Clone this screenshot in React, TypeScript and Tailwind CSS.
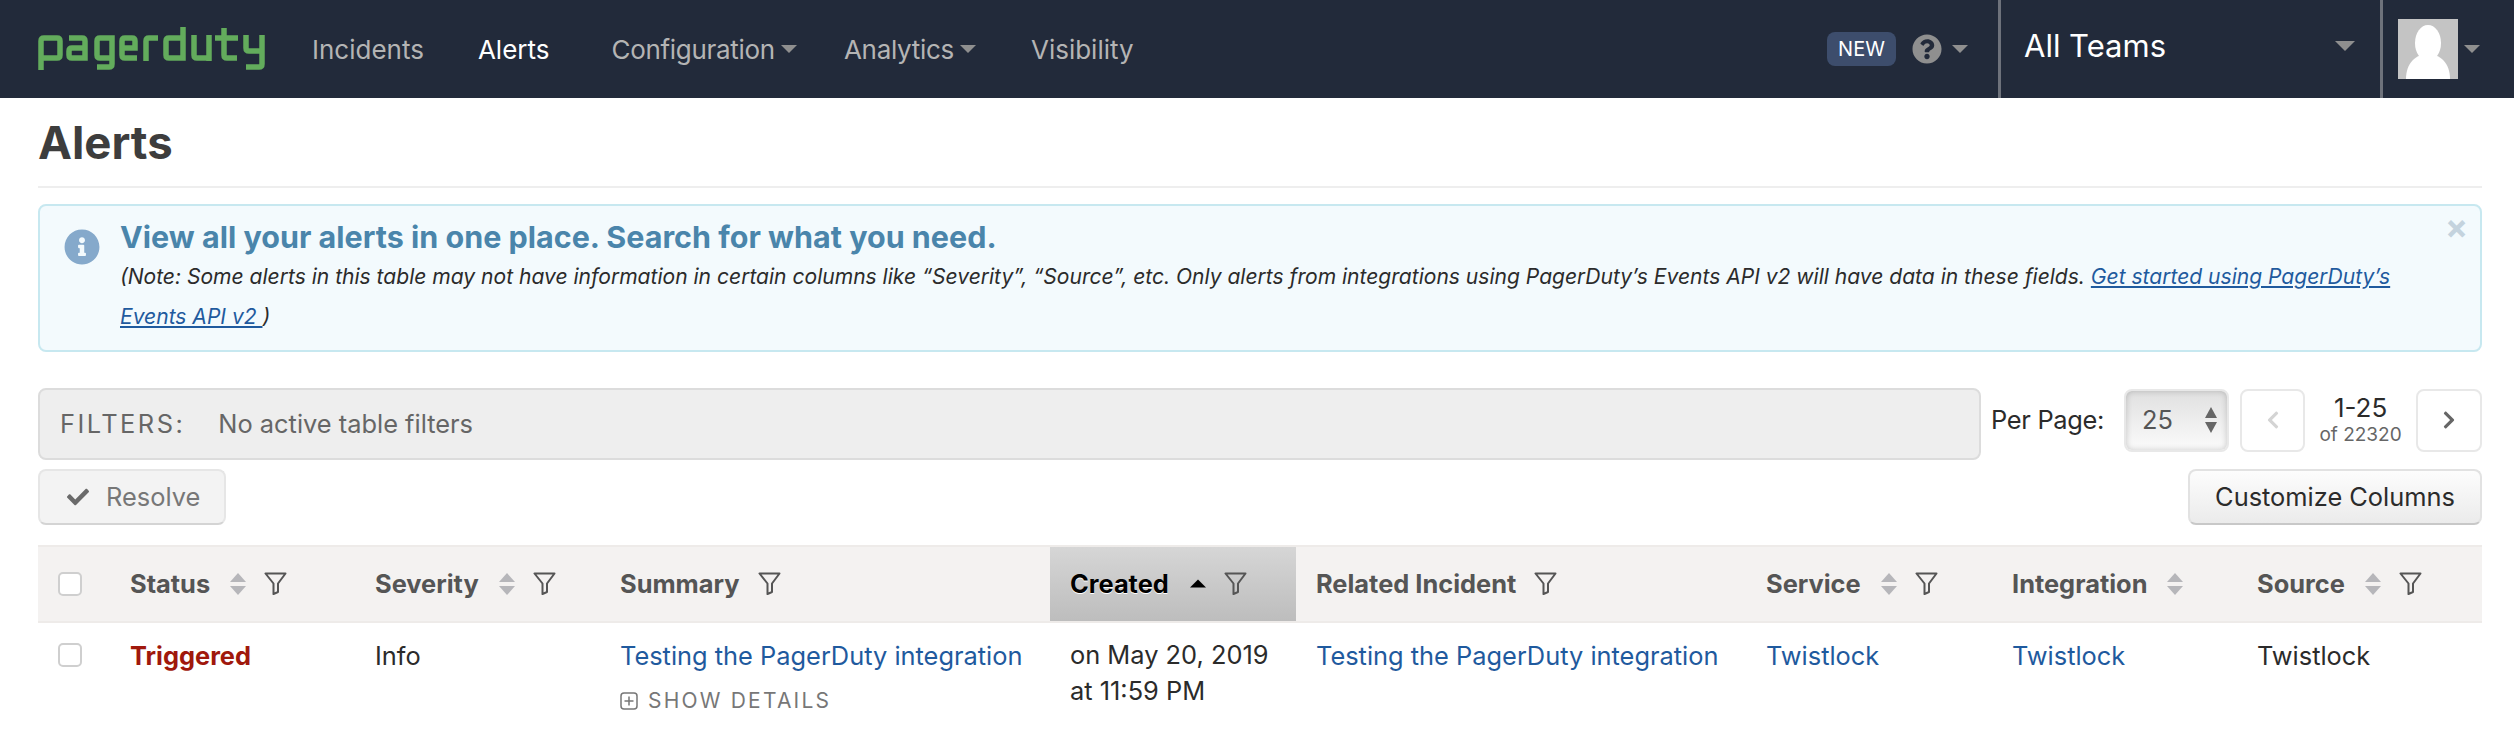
import { FaCheck, FaChevronLeft, FaChevronRight, FaInfoCircle, FaQuestionCircle } from "react-icons/fa";

function Caret({ className = "" }: { className?: string }) {
  return (
    <svg viewBox="0 0 16 8" className={className} fill="currentColor">
      <path d="M0 0H16L8 8Z" />
    </svg>
  );
}

function Logo() {
  return (
    <svg viewBox="38 27 228 44" className="w-[228px] h-[44px] shrink-0" fill="none" stroke="#63ac5c" strokeWidth="5.5">
      <path d="M41 70V41Q41 38 44 38H57Q60 38 60 41V55Q60 58 57 58H41" />
      <path d="M69 38H82Q85 38 85 41V58H72Q69 58 69 55V51Q69 48 72 48H85" />
      <path d="M112 58H100Q97 58 97 55V41Q97 38 100 38H112V64Q112 67 109 67H97" />
      <path d="M122 48H135V41Q135 38 132 38H125Q122 38 122 41V55Q122 58 125 58H137" />
      <path d="M146 61V41Q146 38 149 38H158" />
      <path d="M183 27V58H169Q166 58 166 55V41Q166 38 169 38H183" />
      <path d="M194 35V55Q194 58 197 58H209V35M209 58V61" />
      <path d="M224 28V55Q224 58 227 58H237M215 38H238" />
      <path d="M246 35V48Q246 51 249 51H262M262 35V64Q262 67 259 67H246" />
    </svg>
  );
}

function SortIcon() {
  return (
    <svg viewBox="0 0 16 22" className="w-4 h-[22px] shrink-0 text-[#b6b6ba]" fill="currentColor">
      <path d="M8 0L16 9H0Z" />
      <path d="M0 13H16L8 22Z" />
    </svg>
  );
}

function FilterIcon() {
  return (
    <svg viewBox="0 0 23 23" className="w-[23px] h-[23px] shrink-0 text-[#555]" fill="none" stroke="currentColor" strokeWidth="2" strokeLinejoin="round">
      <path d="M1.5 1.5H21.5L14 11.5V20L9.5 22V11.5Z" />
    </svg>
  );
}

function Checkbox() {
  return <span className="block w-6 h-6 rounded-[5px] border-2 border-[#cfcfcf] bg-white" />;
}

const columns = [
  { name: "Status", sort: true, filter: true },
  { name: "Severity", sort: true, filter: true },
  { name: "Summary", sort: false, filter: true },
  { name: "Created", sort: false, filter: true, active: true },
  { name: "Related Incident", sort: false, filter: true },
  { name: "Service", sort: true, filter: true },
  { name: "Integration", sort: true, filter: false },
  { name: "Source", sort: true, filter: true },
];

const linkClass = "text-[#1f5a9e]";

export default function App() {
  return (
    <div className="w-[2514px] h-[732px] overflow-hidden bg-white text-[25.4px] text-[#2b2b2b] font-['Inter',sans-serif]">
      <header className="h-[98px] bg-[#222a3a] flex items-center pl-[38px] text-[#b4b4b4]">
        <Logo />
        <nav className="flex items-center ml-[46px] text-[26px]">
          <a>Incidents</a>
          <a className="ml-[54px] text-white">Alerts</a>
          <a className="ml-[62px] flex items-center gap-[6px] tracking-[-0.3px]">
            Configuration <Caret className="w-[16px] h-2 text-[#8f8f8f]" />
          </a>
          <a className="ml-[47px] flex items-center gap-[6px] tracking-[-0.3px]">
            Analytics <Caret className="w-[16px] h-2 text-[#8f8f8f]" />
          </a>
          <a className="ml-[55px]">Visibility</a>
        </nav>
        <div className="ml-auto flex items-stretch h-full">
          <div className="flex items-center pr-[30px]">
            <span className="h-[34px] w-[69px] rounded-lg bg-[#3d4d6c] text-white text-[20px] flex items-center justify-center">NEW</span>
            <FaQuestionCircle className="ml-4 text-[30px] text-[#8f8f8f]" />
            <Caret className="ml-[10px] w-4 h-2 text-[#8f8f8f]" />
          </div>
          <div className="w-[382px] border-l-[3px] border-[#6e727b] flex items-center justify-between pl-[23px] pr-[25px] pb-[6px]">
            <span className="text-[31px] text-white">All Teams</span>
            <Caret className="w-5 h-[10px] text-[#8f8f8f]" />
          </div>
          <div className="w-[134px] border-l-[3px] border-[#6e727b] flex items-center pl-[15px]">
            <svg viewBox="0 0 60 60" className="w-[60px] h-[60px] shrink-0">
              <rect width="60" height="60" fill="#c4c4c4" />
              <ellipse cx="30" cy="24" rx="13" ry="18" fill="#fff" />
              <path d="M8 60C8 44 18 35 30 35C42 35 52 44 52 60Z" fill="#fff" />
            </svg>
            <Caret className="ml-[6px] w-4 h-2 text-[#8f8f8f]" />
          </div>
        </div>
      </header>

      <main className="pl-[38px] pr-[32px]">
        <h1 className="h-[90px] border-b-2 border-[#eeeeee] pt-[20px] text-[45.5px] leading-[50px] font-bold text-[#3d3d3d]">Alerts</h1>

        <div className="relative mt-4 h-[148px] rounded-lg border-2 border-[#c7e8f0] bg-[#f3fafd] flex pl-[24px] pt-[12px]">
          <FaInfoCircle className="mt-[11px] text-[36px] text-[#85a9cb] shrink-0" />
          <div className="ml-[20px] pr-[50px]">
            <div className="text-[30.5px] leading-[38px] font-bold text-[#4a85ab]">View all your alerts in one place. Search for what you need.</div>
            <p className="mt-[1px] italic text-[21.05px] leading-[40px] text-[#2b2b2b]">
              (Note: Some alerts in this table may not have information in certain columns like “Severity”, “Source”, etc. Only alerts from integrations using PagerDuty’s Events API v2 will have data in these fields.{" "}
              <a className="text-[#1f5a9e] underline">Get started using PagerDuty’s Events API v2 </a>)
            </p>
          </div>
          <span className="absolute right-[12px] top-[4px] text-[34px] leading-[34px] font-bold text-[#c4d3de]">×</span>
        </div>

        <div className="mt-[36px] flex items-start">
          <div className="w-[1943px] shrink-0 h-[72px] rounded-lg border-2 border-[#dcdcdc] bg-[#eeeeee] flex items-center pl-[20px] text-[#666]">
            <span className="tracking-[2.5px]">FILTERS:</span>
            <span className="ml-[33px]">No active table filters</span>
          </div>
          <div className="ml-[10px] h-[64px] flex items-center">
            <span className="whitespace-nowrap tracking-[-0.3px]">Per Page:</span>
            <div className="ml-[20px] w-[105px] h-[63px] shrink-0 rounded-lg border-2 border-[#e8e8e8] bg-gradient-to-b from-[#e0e0e0] to-[#fbfbfb] shadow-[inset_0_0_6px_rgba(0,0,0,0.2)] flex items-center justify-between pl-[16px] pr-[10px] text-[#555]">
              25
              <svg viewBox="0 0 12 26" className="w-3 h-[26px] text-[#666]" fill="currentColor">
                <path d="M6 0L12 11H0Z" />
                <path d="M0 15H12L6 26Z" />
              </svg>
            </div>
            <div className="ml-[11px] w-[65px] h-[63px] shrink-0 rounded-lg border-2 border-[#e8e8e8] flex items-center justify-center">
              <FaChevronLeft className="text-[20px] text-[#d4d4d4]" />
            </div>
            <div className="w-[111px] shrink-0 flex flex-col items-center">
              <span className="text-[26px] leading-[30px]">1-25</span>
              <span className="text-[19px] leading-[24px] text-[#666]">of 22320</span>
            </div>
            <div className="w-[66px] h-[63px] shrink-0 rounded-lg border-2 border-[#e8e8e8] flex items-center justify-center">
              <FaChevronRight className="text-[20px] text-[#666]" />
            </div>
          </div>
        </div>

        <div className="mt-[9px] flex justify-between">
          <button className="w-[188px] h-[56px] rounded-lg border-2 border-[#e6e6e6] border-b-[#d4d4d4] bg-[#f3f3f3] flex items-center pl-[27px] gap-[17px] text-[#777]">
            <FaCheck className="text-[22px] text-[#6a6a6a]" />
            Resolve
          </button>
          <button className="w-[294px] h-[56px] rounded-lg border-2 border-[#e2e2e2] border-b-[#c8c8c8] bg-gradient-to-b from-[#fdfdfd] to-[#ebebeb] text-[#2b2b2b]">
            Customize Columns
          </button>
        </div>

        <table className="mt-[20px] w-[2444px] table-fixed border-collapse">
          <colgroup>
            <col className="w-[72px]" />
            <col className="w-[245px]" />
            <col className="w-[245px]" />
            <col className="w-[450px]" />
            <col className="w-[246px]" />
            <col className="w-[450px]" />
            <col className="w-[246px]" />
            <col className="w-[245px]" />
            <col className="w-[245px]" />
          </colgroup>
          <thead>
            <tr className="h-[76px] bg-[#f4f2f1] border-y-2 border-[#eeebe9]">
              <th className="pl-[20px]"><Checkbox /></th>
              {columns.map((c) => (
                <th
                  key={c.name}
                  className={`pl-[20px] text-left font-bold ${c.active ? "bg-gradient-to-b from-[#d6d6d6] to-[#bdbdbd] text-black [text-shadow:0_1px_0_#fff]" : "text-[#555]"}`}
                >
                  <div className="flex items-center">
                    <span>{c.name}</span>
                    {c.sort && <span className="ml-[20px]"><SortIcon /></span>}
                    {c.active && <Caret className="ml-[21px] w-4 h-[9px] rotate-180 text-black" />}
                    {c.filter && <span className="ml-[18px]"><FilterIcon /></span>}
                  </div>
                </th>
              ))}
            </tr>
          </thead>
          <tbody>
            <tr className="align-top">
              <td className="pl-[20px] pt-[20px]"><Checkbox /></td>
              <td className="pl-[20px] pt-[14px] font-bold text-[#a0180c]">Triggered</td>
              <td className="pl-[20px] pt-[14px]">Info</td>
              <td className="pl-[20px] pt-[14px]">
                <a className={linkClass}>Testing the PagerDuty integration</a>
                <div className="mt-[14px] flex items-center gap-[10px] text-[21px] leading-[24px] tracking-[2.2px] text-[#777]">
                  <svg viewBox="0 0 18 18" className="w-[18px] h-[18px] text-[#777]" fill="none" stroke="currentColor" strokeWidth="1.5">
                    <rect x="1" y="1" width="16" height="16" rx="3" />
                    <path d="M9 4.5V13.5M4.5 9H13.5" />
                  </svg>
                  SHOW DETAILS
                </div>
              </td>
              <td className="pl-[20px] pt-[14px] leading-[36px]">on May 20, 2019<br />at 11:59 PM</td>
              <td className="pl-[20px] pt-[14px]"><a className={linkClass}>Testing the PagerDuty integration</a></td>
              <td className="pl-[20px] pt-[14px]"><a className={linkClass}>Twistlock</a></td>
              <td className="pl-[20px] pt-[14px]"><a className={linkClass}>Twistlock</a></td>
              <td className="pl-[20px] pt-[14px]">Twistlock</td>
            </tr>
          </tbody>
        </table>
      </main>
    </div>
  );
}
